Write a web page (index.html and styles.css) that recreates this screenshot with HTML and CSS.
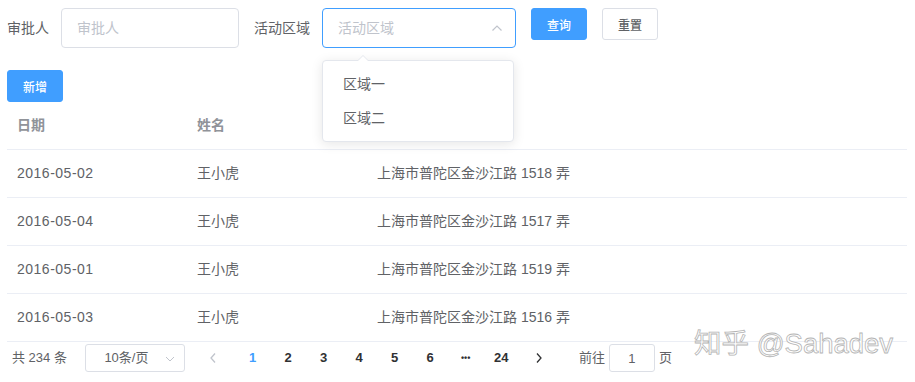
FILE: index.html
```html
<!DOCTYPE html>
<html lang="zh-CN">
<head>
  <meta charset="UTF-8" />
  <title>审批列表</title>
  <link rel="stylesheet" href="styles.css">
</head>
<body>

<form class="search-form">
  <div class="form-item">
    <label class="form-label">审批人</label>
    <input class="input input-user" type="text" placeholder="审批人" />
  </div>
  <div class="form-item">
    <label class="form-label">活动区域</label>
    <div class="select">
      <input class="input input-region is-focus" type="text" placeholder="活动区域" readonly />
      <svg class="select-arrow" width="12" height="8" viewBox="0 0 12 8">
        <polyline points="1.5,6.5 6,2 10.5,6.5" fill="none" stroke="#c0c4cc" stroke-width="1.2" />
      </svg>
      <ul class="dropdown">
        <li>区域一</li>
        <li>区域二</li>
      </ul>
    </div>
  </div>
  <div class="form-item">
    <button type="button" class="btn btn-primary">查询</button>
  </div>
  <div class="form-item">
    <button type="button" class="btn">重置</button>
  </div>
</form>

<div class="toolbar">
  <button type="button" class="btn btn-primary">新增</button>
</div>

<table class="data-table">
  <colgroup>
    <col class="col-date" />
    <col class="col-name" />
    <col />
  </colgroup>
  <thead>
    <!-- address header sits under the open dropdown -->
    <tr><th>日期</th><th>姓名</th><th></th></tr>
  </thead>
  <tbody>
    <tr><td class="date">2016-05-02</td><td>王小虎</td><td>上海市普陀区金沙江路 1518 弄</td></tr>
    <tr><td class="date">2016-05-04</td><td>王小虎</td><td>上海市普陀区金沙江路 1517 弄</td></tr>
    <tr><td class="date">2016-05-01</td><td>王小虎</td><td>上海市普陀区金沙江路 1519 弄</td></tr>
    <tr><td class="date">2016-05-03</td><td>王小虎</td><td>上海市普陀区金沙江路 1516 弄</td></tr>
  </tbody>
</table>

<div class="pagination">
  <span class="total">共 234 条</span>
  <div class="sizes">
    <span>10条/页</span>
    <svg class="sizes-arrow" width="10" height="6" viewBox="0 0 10 6">
      <polyline points="1,1 5,5 9,1" fill="none" stroke="#c0c4cc" stroke-width="1" />
    </svg>
  </div>
  <button type="button" class="page-btn btn-prev" disabled>
    <svg width="8" height="12" viewBox="0 0 8 12"><polyline points="6,1.5 2,6 6,10.5" fill="none" stroke="#c0c4cc" stroke-width="1.3" /></svg>
  </button>
  <ul class="pager">
    <li class="active">1</li>
    <li>2</li>
    <li>3</li>
    <li>4</li>
    <li>5</li>
    <li>6</li>
    <li class="more">•••</li>
    <li>24</li>
  </ul>
  <button type="button" class="page-btn btn-next">
    <svg width="8" height="12" viewBox="0 0 8 12"><polyline points="2,1.5 6,6 2,10.5" fill="none" stroke="#303133" stroke-width="1.3" /></svg>
  </button>
  <span class="jump">前往<input class="jump-input" type="text" value="1" />页</span>
</div>

<div class="watermark">知乎 @Sahadev</div>

</body>
</html>
```

FILE: styles.css
```css
body {
  margin: 8px 8px 0 7px;
  font-family: "Liberation Sans", "Noto Sans CJK SC", sans-serif;
  font-size: 14px;
  color: #606266;
  background: #fff;
}
.search-form {
  display: flex;
  align-items: flex-start;
  margin-bottom: 22px;
}
.form-item {
  display: flex;
  align-items: flex-start;
  margin-right: 15px;
}
.form-label {
  line-height: 40px;
  padding-right: 12px;
  color: #606266;
}
.input {
  box-sizing: border-box;
  height: 40px;
  padding: 0 15px;
  border: 1px solid #dcdfe6;
  border-radius: 4px;
  font-family: inherit;
  font-size: 14px;
  color: #606266;
  outline: none;
  background: #fff;
}
.input::placeholder {
  color: #c0c4cc;
}
.input-user {
  width: 178px;
}
.select {
  position: relative;
}
.input-region {
  width: 194px;
  padding-right: 30px;
}
.input.is-focus {
  border-color: #409eff;
}
.select-arrow {
  position: absolute;
  right: 13px;
  top: 16px;
}
.dropdown {
  position: absolute;
  top: 52px;
  left: 0;
  width: 192px;
  box-sizing: border-box;
  margin: 0;
  padding: 6px 0;
  list-style: none;
  background: #fff;
  border: 1px solid #e4e7ed;
  border-radius: 4px;
  box-shadow: 0 2px 12px rgba(0,0,0,0.1);
  z-index: 10;
}
.dropdown::before,
.dropdown::after {
  content: "";
  position: absolute;
  left: 34px;
  border: 6px solid transparent;
  border-top-width: 0;
}
.dropdown::before {
  top: -6px;
  border-bottom-color: #e4e7ed;
}
.dropdown::after {
  top: -5px;
  border-bottom-color: #fff;
}
.dropdown li {
  padding: 0 20px;
  height: 34px;
  line-height: 34px;
  font-size: 14px;
  color: #606266;
}
.btn {
  box-sizing: border-box;
  height: 32px;
  width: 56px;
  padding: 0;
  border: 1px solid #dcdfe6;
  border-radius: 3px;
  background: #fff;
  color: #606266;
  font-family: inherit;
  font-size: 12px;
  font-weight: 500;
  cursor: pointer;
}
.btn-primary {
  background: #409eff;
  border-color: #409eff;
  color: #fff;
}
.data-table {
  width: 900px;
  border-collapse: collapse;
  table-layout: fixed;
}
.col-date,
.col-name {
  width: 180px;
}
.data-table th,
.data-table td {
  padding: 12px 10px;
  line-height: 23px;
  text-align: left;
  border-bottom: 1px solid #ebeef5;
  white-space: nowrap;
}
.data-table th {
  color: #909399;
  font-weight: 700;
  font-size: 14px;
}
.data-table td {
  color: #606266;
  font-size: 14px;
}
.data-table td.date {
  letter-spacing: 0.5px;
}
.pagination {
  display: flex;
  align-items: center;
  padding: 2px 5px;
  font-size: 13px;
  color: #303133;
}
.total {
  color: #606266;
  margin-right: 10px;
  line-height: 28px;
}
.sizes {
  position: relative;
  box-sizing: border-box;
  width: 100px;
  height: 28px;
  margin: 0 10px 0 8px;
  padding: 0 25px 0 8px;
  border: 1px solid #dcdfe6;
  border-radius: 3px;
  text-align: center;
  line-height: 26px;
  color: #606266;
}
.sizes-arrow {
  position: absolute;
  right: 9px;
  top: 11px;
}
.page-btn {
  width: 36px;
  height: 28px;
  padding: 0;
  border: none;
  background: none;
  display: flex;
  align-items: center;
  justify-content: center;
}
.btn-next {
  width: 40px;
}
.pager {
  display: flex;
  margin: 0 0 0 4px;
  padding: 0;
  list-style: none;
}
.pager li {
  min-width: 35.5px;
  height: 28px;
  line-height: 28px;
  text-align: center;
  font-weight: 700;
  color: #303133;
}
.pager li.active {
  color: #409eff;
}
.pager li.more {
  font-size: 9px;
}
.jump {
  display: flex;
  align-items: center;
  margin-left: 20px;
  color: #606266;
  line-height: 28px;
}
.jump-input {
  box-sizing: border-box;
  width: 46px;
  height: 28px;
  margin: 0 4px;
  border: 1px solid #dcdfe6;
  border-radius: 3px;
  text-align: center;
  font-family: inherit;
  font-size: 13px;
  color: #606266;
  outline: none;
}
.watermark {
  position: absolute;
  left: 694px;
  top: 327px;
  font-family: "Liberation Sans", "Noto Sans CJK SC", sans-serif;
  font-size: 27.5px;
  line-height: 34px;
  color: #fff;
  -webkit-text-stroke: 0.8px #b4b4b4;
  white-space: nowrap;
}
```
